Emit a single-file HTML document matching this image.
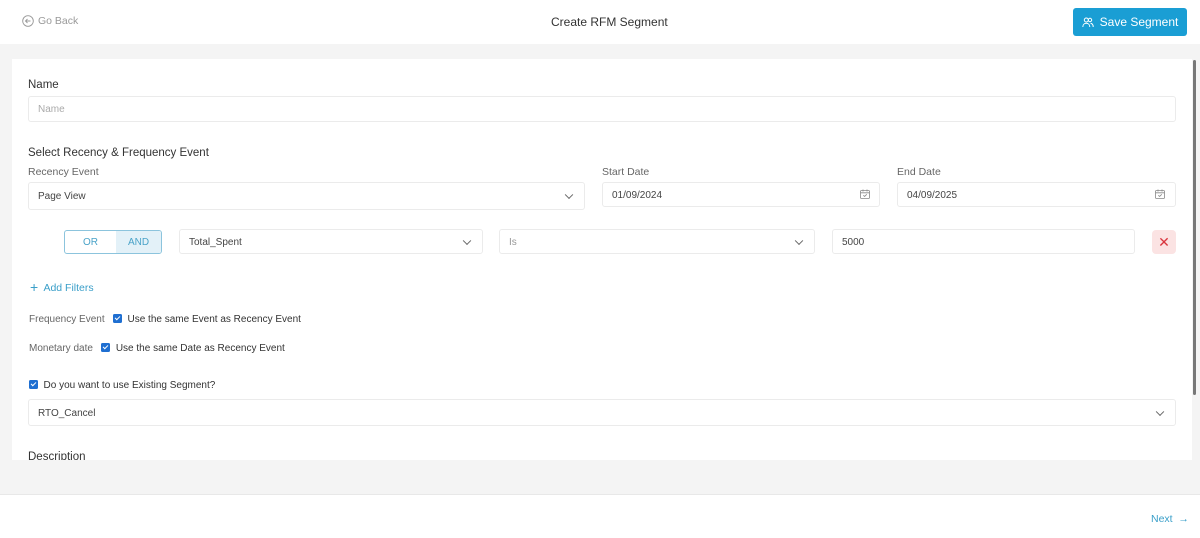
<!DOCTYPE html>
<html><head><style>
*{box-sizing:border-box;margin:0;padding:0}
body{width:1200px;height:538px;overflow:hidden;background:#f4f4f4;font-family:"Liberation Sans",sans-serif;font-size:11px;color:#333;position:relative}
.hdr{position:absolute;left:0;top:0;width:1200px;height:44px;background:#fff}
.abs{position:absolute}
.card{position:absolute;left:12px;top:59px;width:1180px;height:401px;background:#fff;overflow:hidden}
.inp{position:absolute;border:1px solid #ebebeb;border-radius:3px;background:#fff;font-size:10px;color:#444;padding-left:9px;padding-top:1px;display:flex;align-items:center}
.lbl{position:absolute;font-size:10.5px;color:#666}
.chev{position:absolute;right:12px;top:50%;width:6px;height:6px;border-right:1px solid #666;border-bottom:1px solid #666;transform:translateY(-70%) rotate(45deg)}
.cb{display:inline-block;width:9px;height:9px;background:#1f6fd1;border-radius:1.5px;position:relative;vertical-align:-1px}
.cb:after{content:"";position:absolute;left:3px;top:1px;width:2px;height:4px;border-right:1.3px solid #fff;border-bottom:1.3px solid #fff;transform:rotate(45deg)}
.foot{position:absolute;left:0;top:494px;width:1200px;height:44px;background:#fff;border-top:1px solid #e8e8e8}
</style></head><body>
<div class="hdr">
 <svg class="abs" style="left:22px;top:15px" width="12" height="12" viewBox="0 0 12 12"><circle cx="6" cy="6" r="5.3" fill="none" stroke="#999" stroke-width="0.9"/><path d="M8.5 6H3.6M5.5 4L3.5 6L5.5 8" fill="none" stroke="#999" stroke-width="0.9"/></svg>
 <div class="abs" style="left:38px;top:15px;font-size:10.5px;color:#999">Go Back</div>
 <div class="abs" style="left:551px;top:15px;font-size:12px;color:#333">Create RFM Segment</div>
 <div class="abs" style="left:1073px;top:8px;width:114px;height:28px;background:#1a9ed4;border-radius:3px;color:#fff;font-size:12px;display:flex;align-items:center;justify-content:center;gap:6px">
  <svg width="12" height="11" viewBox="0 0 12 11"><circle cx="4.3" cy="3" r="2" fill="none" stroke="#fff" stroke-width="1"/><circle cx="8" cy="3" r="1.7" fill="none" stroke="#fff" stroke-width="1"/><path d="M0.8 10C0.8 7.5 2.5 6.3 4.3 6.3S7.8 7.5 7.8 10M8.5 6.3C10 6.5 11.2 7.6 11.2 10" fill="none" stroke="#fff" stroke-width="1"/></svg>Save Segment</div>
</div>
<div class="card">
 <div class="abs" style="left:16px;top:20px;font-size:11.5px;color:#333">Name</div>
 <div class="inp" style="left:16px;top:37px;width:1148px;height:26px;color:#aaa">Name</div>
 <div class="abs" style="left:16px;top:88px;font-size:11.5px;color:#333">Select Recency &amp; Frequency Event</div>
 <div class="lbl" style="left:16px;top:107px">Recency Event</div>
 <div class="inp" style="left:16px;top:123px;width:557px;height:28px">Page View<span class="chev"></span></div>
 <div class="lbl" style="left:590px;top:107px">Start Date</div>
 <div class="inp" style="left:590px;top:123px;width:278px;height:25px">01/09/2024</div>
 <div class="lbl" style="left:885px;top:107px">End Date</div>
 <div class="inp" style="left:885px;top:123px;width:279px;height:25px">04/09/2025</div>
 <svg class="abs" style="left:848px;top:130px" width="10" height="10" viewBox="0 0 10 10"><rect x="0.5" y="1.5" width="9" height="8" rx="1" fill="none" stroke="#888" stroke-width="0.8"/><path d="M0.5 3.8H9.5M3 0.5V2.5M7 0.5V2.5M3.3 6.3L4.6 7.4L6.8 5.3" fill="none" stroke="#888" stroke-width="0.8"/></svg>
 <svg class="abs" style="left:1143px;top:130px" width="10" height="10" viewBox="0 0 10 10"><rect x="0.5" y="1.5" width="9" height="8" rx="1" fill="none" stroke="#888" stroke-width="0.8"/><path d="M0.5 3.8H9.5M3 0.5V2.5M7 0.5V2.5M3.3 6.3L4.6 7.4L6.8 5.3" fill="none" stroke="#888" stroke-width="0.8"/></svg>
 <div class="abs" style="left:52px;top:171px;width:98px;height:24px;border:1px solid #8cc4dd;border-radius:3px;display:flex;overflow:hidden;font-size:10px;color:#4aa3c8">
  <div style="width:51px;display:flex;align-items:center;justify-content:center">OR</div>
  <div style="flex:1;background:#e3f1f8;display:flex;align-items:center;justify-content:center">AND</div></div>
 <div class="inp" style="left:167px;top:170px;width:304px;height:25px">Total_Spent<span class="chev"></span></div>
 <div class="inp" style="left:487px;top:170px;width:316px;height:25px;color:#999">Is<span class="chev"></span></div>
 <div class="inp" style="left:820px;top:170px;width:303px;height:25px">5000</div>
 <div class="abs" style="left:1140px;top:171px;width:24px;height:24px;background:#fbe3e3;border-radius:4px;color:#d9363e;font-size:14px;display:flex;align-items:center;justify-content:center">✕</div>
 <div class="abs" style="left:18px;top:220px;font-size:10.5px;color:#3a9fc9"><span style="font-size:14px;vertical-align:-1px">+</span>&nbsp; Add Filters</div>
 <div class="abs" style="left:17px;top:255px;font-size:10px;color:#666">Frequency Event &nbsp;&nbsp;<span class="cb"></span>&nbsp; <span style="color:#333">Use the same Event as Recency Event</span></div>
 <div class="abs" style="left:17px;top:284px;font-size:10px;color:#666">Monetary date &nbsp;&nbsp;<span class="cb"></span>&nbsp; <span style="color:#333">Use the same Date as Recency Event</span></div>
 <div class="abs" style="left:17px;top:321px;font-size:10px;color:#333"><span class="cb"></span>&nbsp; Do you want to use Existing Segment?</div>
 <div class="inp" style="left:16px;top:340px;width:1148px;height:27px">RTO_Cancel<span class="chev"></span></div>
 <div class="abs" style="left:16px;top:392px;font-size:11.5px;color:#333">Description</div>
</div>
<div class="abs" style="left:1193px;top:60px;width:3px;height:335px;background:#777;border-radius:2px"></div>
<div class="foot"><div class="abs" style="left:1151px;top:18px;font-size:10.5px;color:#3a9fc9">Next &nbsp;→</div></div>
</body></html>
